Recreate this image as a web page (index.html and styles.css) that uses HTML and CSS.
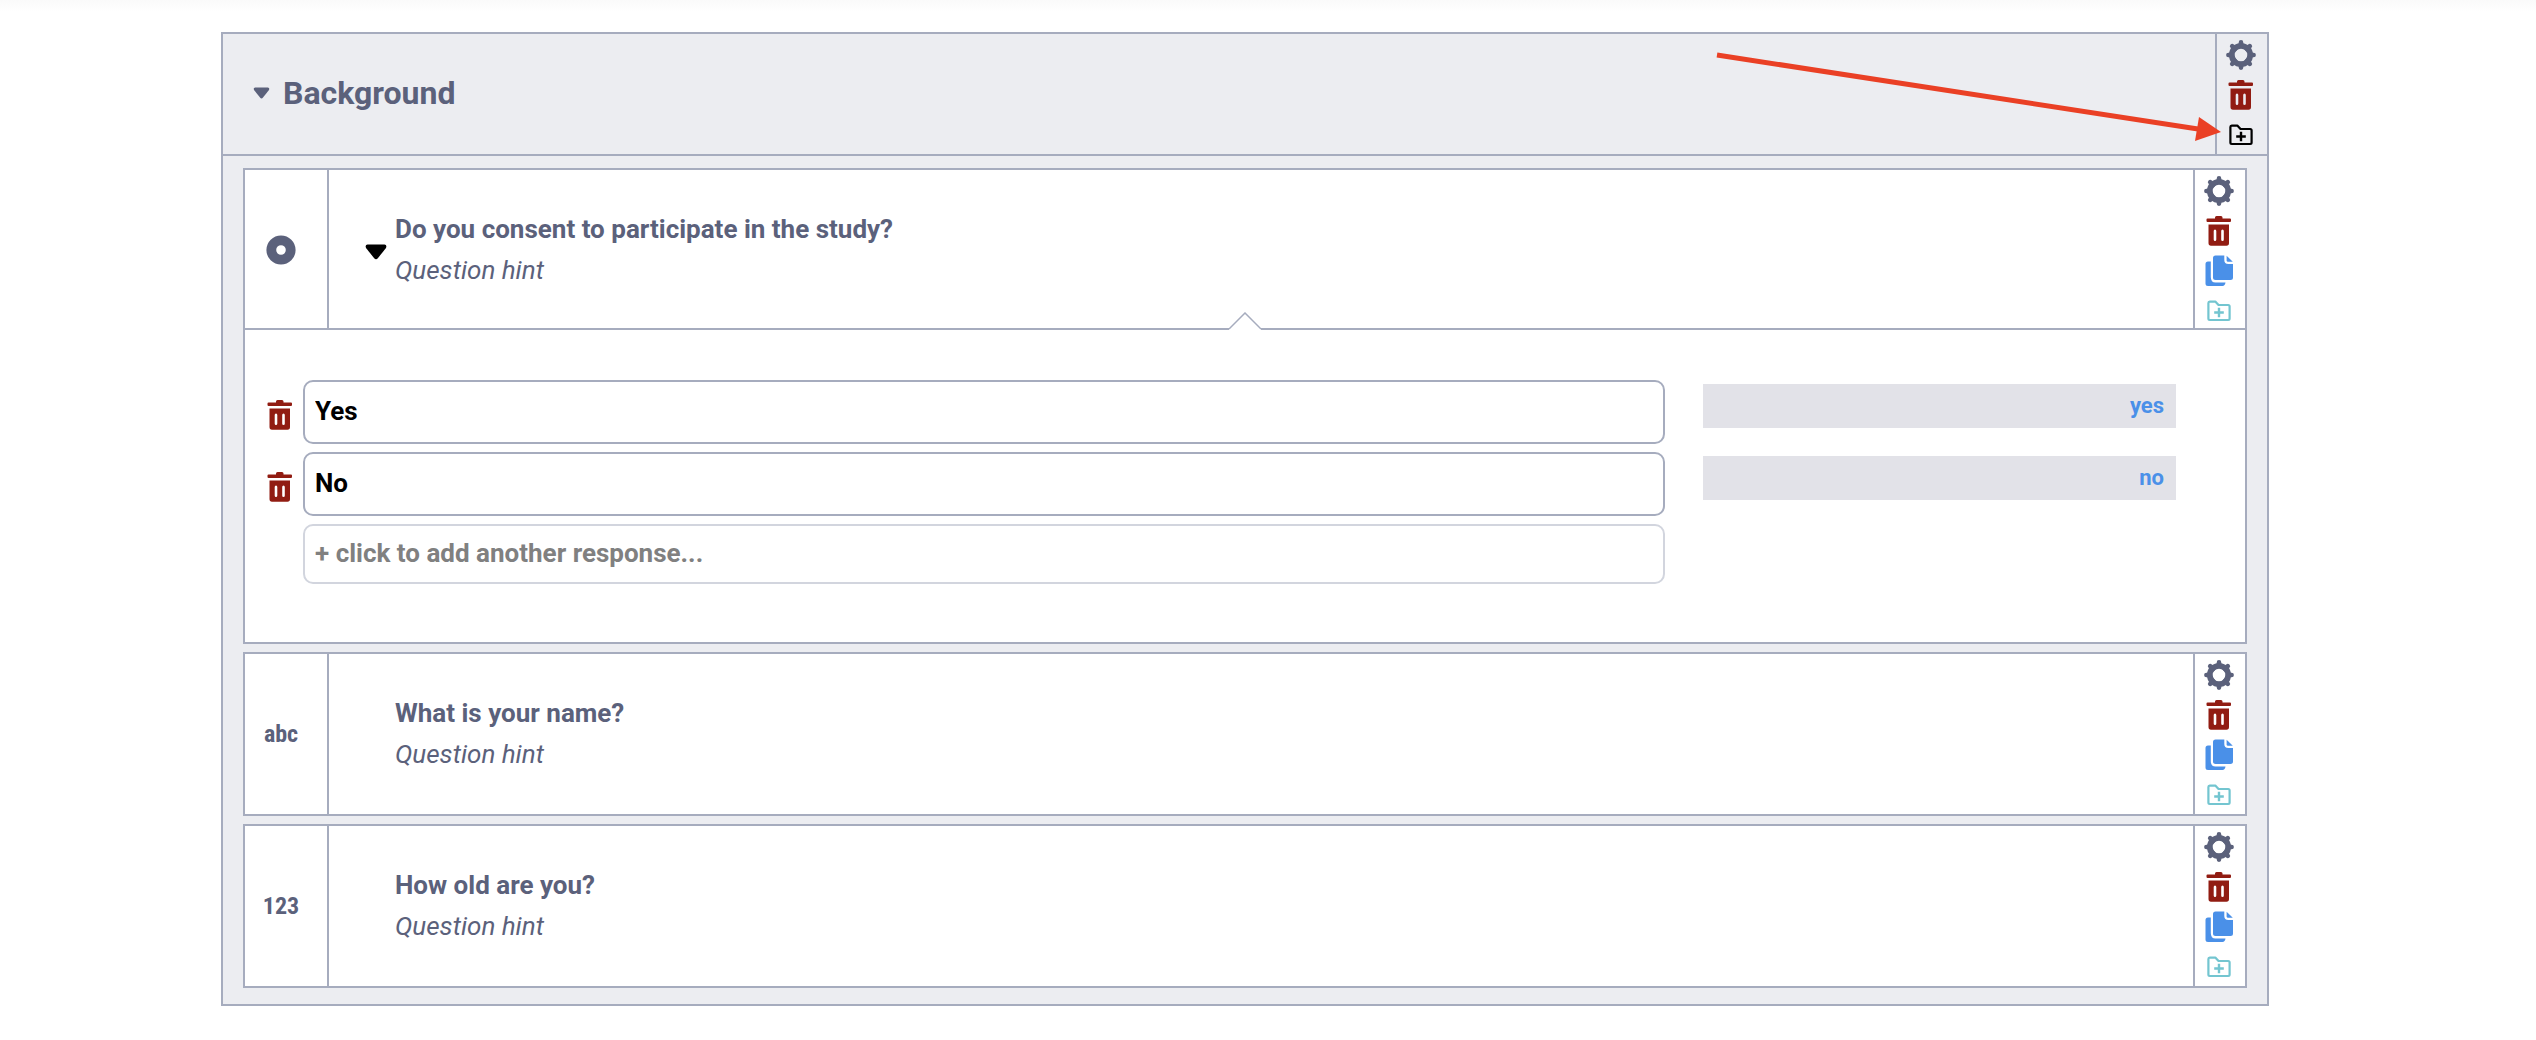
FILE: index.html
```html
<!DOCTYPE html>
<html lang="en">
<head>
    <meta charset="UTF-8">
    <meta name="viewport" content="width=device-width, initial-scale=1.0">
    <title>Form Builder</title>
    <link rel="stylesheet" href="styles.css">
</head>
<body>
    <!-- Icon definitions -->
    <svg class="icon-defs" aria-hidden="true">
        <symbol id="icon-gear" viewBox="0 0 30 30">
            <path fill="none" stroke="currentColor" stroke-width="4.6" stroke-linecap="round" d="M15 2.4V6M15 24V27.6M2.4 15H6M24 15H27.6M6.2 6.2L9 9M21 21L23.8 23.8M23.8 6.2L21 9M9 21L6.2 23.8"/>
            <circle cx="15" cy="15" r="9.2" fill="none" stroke="currentColor" stroke-width="5.8"/>
        </symbol>
        <symbol id="icon-trash" viewBox="0 0 26 30">
            <path fill="currentColor" d="M1.5 2.4H9V1.5Q9 0 10.5 0H15Q16.5 0 16.5 1.5V2.4H24Q25 2.4 25 3.6V4.8Q25 6 24 6H1.5Q.5 6 .5 4.8V3.6Q.5 2.4 1.5 2.4Z"/>
            <path fill="currentColor" fill-rule="evenodd" d="M2.5 8.4H23V27Q23 29.8 20.5 29.8H5Q2.5 29.8 2.5 27ZM9 13.5Q7.7 13.5 7.7 15V23.5Q7.7 25 9 25Q10.3 25 10.3 23.5V15Q10.3 13.5 9 13.5ZM16.5 13.5Q15.2 13.5 15.2 15V23.5Q15.2 25 16.5 25Q17.8 25 17.8 23.5V15Q17.8 13.5 16.5 13.5Z"/>
        </symbol>
        <symbol id="icon-copy" viewBox="0 0 28 32">
            <path fill="currentColor" d="M3 6.5H5.8V22Q5.8 27.6 10.5 27.6H20.5Q20 31 17.5 31H3Q.5 31 .5 28.5V9Q.5 6.5 3 6.5Z"/>
            <path fill="currentColor" d="M10.5 .5H19.3V5Q19.3 9 23.3 9H28V22.5Q28 25 25.5 25H10.5Q8 25 8 22.5V3Q8 .5 10.5 .5Z"/>
            <path fill="currentColor" d="M21.6 .8L27.8 6.8H23Q21.6 6.8 21.6 5.3Z"/>
        </symbol>
        <symbol id="icon-folder" viewBox="0 0 24 22">
            <path fill="none" stroke="currentColor" stroke-width="2.2" stroke-linejoin="round" d="M2.7 1.6H8.3L11.5 5H21.2Q22.6 5 22.6 6.4V18.6Q22.600 20 21.200 20H2.800Q1.400 20 1.400 18.600V3Q1.400 1.600 2.700 1.600Z"/>
            <path fill="none" stroke="currentColor" stroke-width="2.4" d="M12 7.700V17.300M7.200 12.500H16.800"/>
        </symbol>
        <symbol id="icon-caret" viewBox="0 0 22 16">
            <path fill="currentColor" d="M2.5 .5H19.5Q22.2 .8 21 4L13 14Q11 16.5 9 14L1 4Q-.2 .8 2.5 .5Z"/>
        </symbol>
    </svg>

    <main class="form-builder">
        <section class="group">
            <header class="group-header">
                <div class="group-title">
                    <button class="caret-small" type="button" aria-label="Collapse group"><svg><use href="#icon-caret"/></svg></button>
                    <h1>Background</h1>
                </div>
                <div class="actions">
                    <button class="gear" type="button" aria-label="Settings"><svg><use href="#icon-gear"/></svg></button>
                    <button class="trash" type="button" aria-label="Delete"><svg><use href="#icon-trash"/></svg></button>
                    <button class="folder active" type="button" aria-label="Add to library"><svg><use href="#icon-folder"/></svg></button>
                </div>
                <svg class="pointer" viewBox="0 0 510 90" aria-hidden="true">
                    <path d="M2 9L483 83" fill="none" stroke="#ea4025" stroke-width="5"/>
                    <path d="M484 71L506 86L480 95Z" fill="#ea4025"/>
                </svg>
            </header>

            <div class="group-items">
                <!-- Select one question -->
                <article class="question">
                    <div class="question-row">
                        <div class="question-type"><svg class="radio-icon" viewBox="0 0 30 30"><circle cx="15" cy="15" r="9.7" fill="none" stroke="currentColor" stroke-width="9.8"/></svg></div>
                        <div class="question-text">
                            <button class="caret" type="button" aria-label="Collapse question"><svg><use href="#icon-caret"/></svg></button>
                            <div>
                                <h2>Do you consent to participate in the study?</h2>
                                <p class="hint">Question hint</p>
                            </div>
                        </div>
                        <div class="actions">
                            <button class="gear" type="button" aria-label="Settings"><svg><use href="#icon-gear"/></svg></button>
                            <button class="trash" type="button" aria-label="Delete"><svg><use href="#icon-trash"/></svg></button>
                            <button class="copy" type="button" aria-label="Duplicate"><svg><use href="#icon-copy"/></svg></button>
                            <button class="folder" type="button" aria-label="Add to library"><svg><use href="#icon-folder"/></svg></button>
                        </div>
                    </div>
                    <div class="responses">
                        <svg class="notch" viewBox="0 0 32 18" aria-hidden="true"><path d="M0 17L16 1L32 17V18H0Z" fill="#fff"/><path d="M0 17L16 1L32 17" fill="none" stroke="#a6acbe" stroke-width="1.5"/></svg>
                        <div class="response">
                            <button class="trash" type="button" aria-label="Delete response"><svg><use href="#icon-trash"/></svg></button>
                            <input class="response-label" type="text" value="Yes" aria-label="Response label">
                            <input class="response-code" type="text" value="yes" aria-label="Response value">
                        </div>
                        <div class="response">
                            <button class="trash" type="button" aria-label="Delete response"><svg><use href="#icon-trash"/></svg></button>
                            <input class="response-label" type="text" value="No" aria-label="Response label">
                            <input class="response-code" type="text" value="no" aria-label="Response value">
                        </div>
                        <div class="response">
                            <button class="add-response" type="button">+ click to add another response...</button>
                        </div>
                    </div>
                </article>

                <!-- Text question -->
                <article class="question">
                    <div class="question-row">
                        <div class="question-type">abc</div>
                        <div class="question-text">
                            <div>
                                <h2>What is your name?</h2>
                                <p class="hint">Question hint</p>
                            </div>
                        </div>
                        <div class="actions">
                            <button class="gear" type="button" aria-label="Settings"><svg><use href="#icon-gear"/></svg></button>
                            <button class="trash" type="button" aria-label="Delete"><svg><use href="#icon-trash"/></svg></button>
                            <button class="copy" type="button" aria-label="Duplicate"><svg><use href="#icon-copy"/></svg></button>
                            <button class="folder" type="button" aria-label="Add to library"><svg><use href="#icon-folder"/></svg></button>
                        </div>
                    </div>
                </article>

                <!-- Number question -->
                <article class="question">
                    <div class="question-row">
                        <div class="question-type">123</div>
                        <div class="question-text">
                            <div>
                                <h2>How old are you?</h2>
                                <p class="hint">Question hint</p>
                            </div>
                        </div>
                        <div class="actions">
                            <button class="gear" type="button" aria-label="Settings"><svg><use href="#icon-gear"/></svg></button>
                            <button class="trash" type="button" aria-label="Delete"><svg><use href="#icon-trash"/></svg></button>
                            <button class="copy" type="button" aria-label="Duplicate"><svg><use href="#icon-copy"/></svg></button>
                            <button class="folder" type="button" aria-label="Add to library"><svg><use href="#icon-folder"/></svg></button>
                        </div>
                    </div>
                </article>
            </div>
        </section>
    </main>
</body>
</html>
```
FILE: styles.css
```css
* {
    margin: 0;
    padding: 0;
    box-sizing: border-box;
}

body {
    font-family: Roboto, sans-serif;
    font-size: 26px;
    color: #5b617b;
    background: linear-gradient(#fafafa, #fff 12px) no-repeat #fff;
}

button {
    background: none;
    border: none;
    font: inherit;
    color: inherit;
    cursor: pointer;
}

button svg {
    display: block;
}

.icon-defs {
    position: absolute;
    width: 0;
    height: 0;
}

.form-builder {
    padding: 32px 267px 32px 221px;
}

.group {
    background-color: #ecedf1;
    border: 2px solid #a6acbe;
}

.group-header {
    position: relative;
    display: flex;
    border-bottom: 2px solid #a6acbe;
}

.group-title {
    flex: 1;
    display: flex;
    align-items: center;
    gap: 13px;
    padding: 0 0 2px 30px;
}

h1 {
    font-size: 32px;
    font-weight: 700;
    line-height: 40px;
}

.caret-small svg {
    width: 17px;
    height: 12px;
}

.pointer {
    position: absolute;
    top: 12px;
    right: 42px;
    width: 510px;
    height: 90px;
    overflow: visible;
    pointer-events: none;
}

/* Icon column */
.actions {
    flex: none;
    width: 52px;
    border-left: 2px solid #a6acbe;
}

.actions button {
    display: flex;
    align-items: center;
    justify-content: center;
    width: 100%;
    height: 40px;
    padding: 2px 2px 0 0;
}

.gear svg {
    width: 30px;
    height: 30px;
}

.trash {
    color: #911c12;
}

.trash svg {
    width: 26px;
    height: 30px;
}

.copy {
    color: #4a90e8;
}

.copy svg {
    width: 28px;
    height: 32px;
}

.folder {
    color: #73c5d0;
}

.folder.active {
    color: #000;
}

.folder svg {
    width: 24px;
    height: 22px;
}

/* Questions */
.group-items {
    display: flex;
    flex-direction: column;
    gap: 8px;
    padding: 12px 20px 16px;
}

.question {
    background-color: #fff;
    border: 2px solid #a6acbe;
}

.question-row {
    display: flex;
}

.question-type {
    flex: none;
    display: flex;
    align-items: center;
    justify-content: center;
    width: 84px;
    padding-right: 10px;
    border-right: 2px solid #a6acbe;
    font-family: "Roboto Condensed", "Liberation Sans Narrow", Roboto, sans-serif;
    font-size: 24px;
    font-weight: 700;
}

.radio-icon {
    width: 30px;
    height: 30px;
}

.question-text {
    position: relative;
    flex: 1;
    display: flex;
    align-items: center;
    padding-left: 66px;
}

.caret {
    position: absolute;
    left: 36px;
    padding-top: 4px;
    color: #000;
}

.caret svg {
    width: 22px;
    height: 16px;
}

h2 {
    font-size: 26px;
    font-weight: 700;
    line-height: 41px;
}

.hint {
    font-style: italic;
    line-height: 41px;
}

/* Responses */
.responses {
    position: relative;
    display: flex;
    flex-direction: column;
    gap: 8px;
    margin-top: -2px;
    padding: 50px 69px 58px 12px;
    background-color: #fff;
    border-top: 2px solid #a6acbe;
}

.notch {
    position: absolute;
    top: -18px;
    left: 50%;
    width: 32px;
    height: 18px;
    margin-left: -16px;
}

.response {
    display: grid;
    grid-template-columns: 46px 72fr 38px 25fr;
}

.response .trash {
    display: flex;
    align-items: center;
    justify-content: center;
    padding-top: 5px;
}

.response-label,
.add-response {
    height: 64px;
    padding: 0 10px 2px;
    border: 2px solid #a6acbe;
    border-radius: 10px;
    background-color: #fff;
    font: 700 26px Roboto, sans-serif;
    color: #000;
    text-align: left;
}

.add-response {
    grid-column: 2;
    height: 60px;
    border-color: #d2d5de;
    color: #808080;
}

.response-code {
    grid-column: 4;
    height: 44px;
    margin-top: 4px;
    padding: 0 12px 2px;
    border: none;
    background-color: #e2e2e8;
    font: 700 22px Roboto, sans-serif;
    color: #4a90e8;
    text-align: right;
}
```
